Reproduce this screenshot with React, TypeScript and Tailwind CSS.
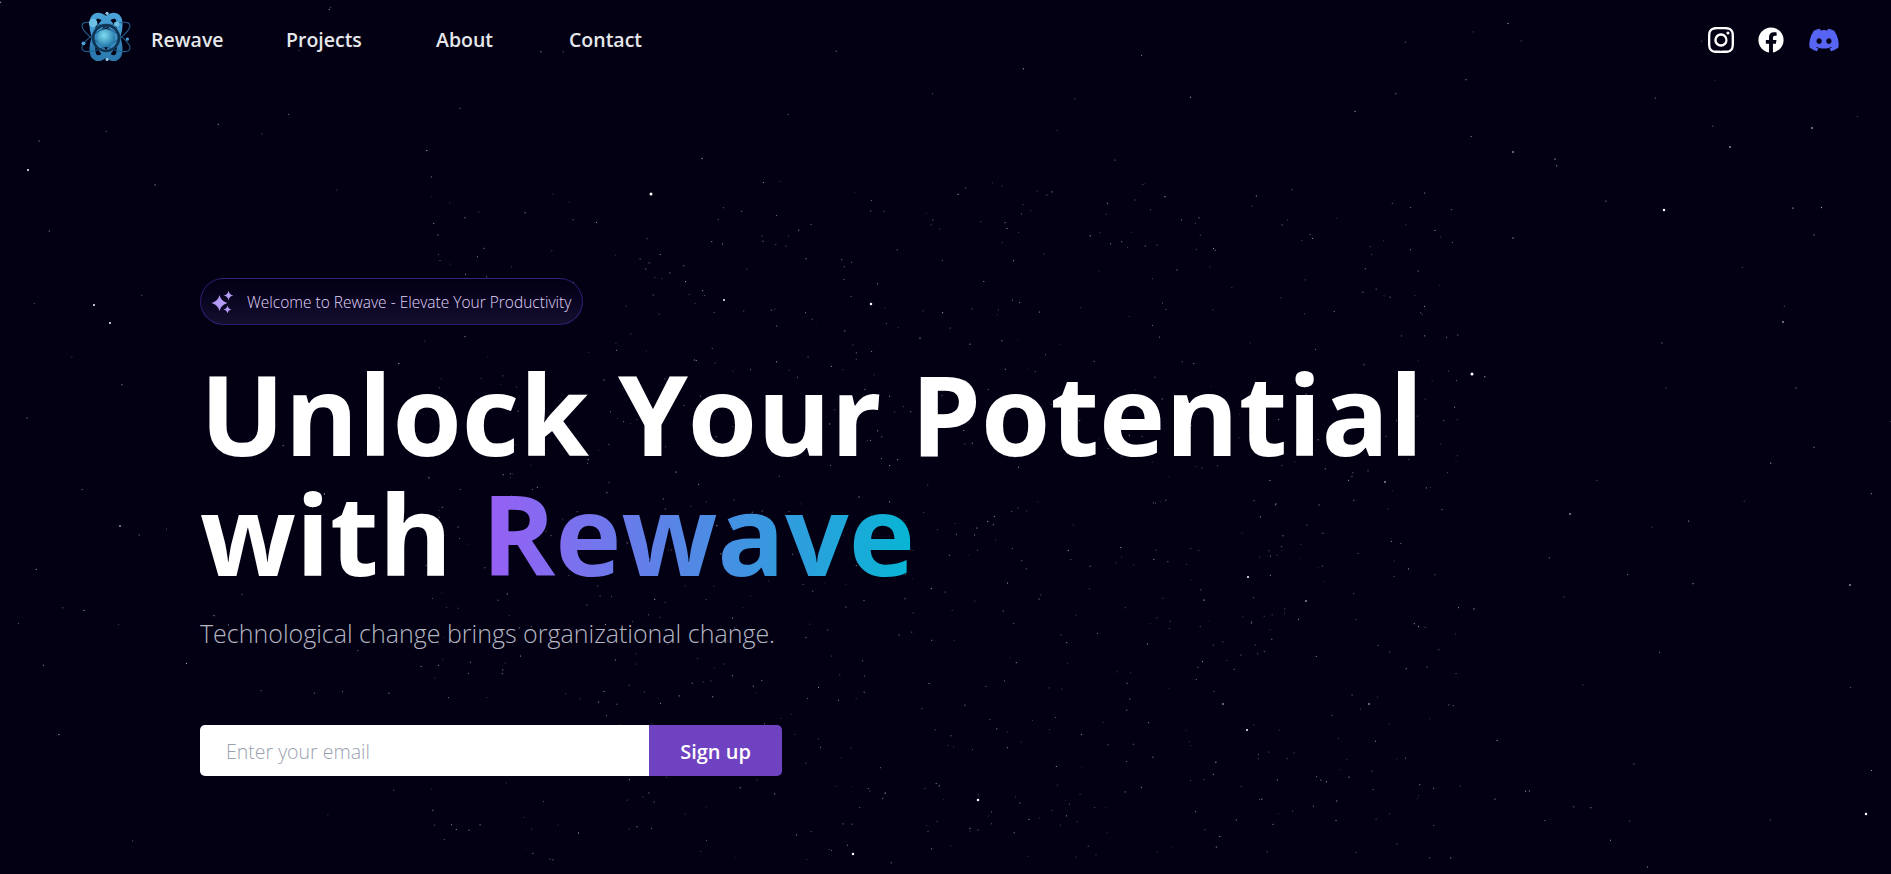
import React from "react";
import { BsInstagram } from "react-icons/bs";
import { FaDiscord, FaFacebook } from "react-icons/fa";

// seeded so the star field comes out the same on every load
const makeStars = (scattered: number, clustered: number) => {
  let seed = 4217;
  const rand = () => {
    seed = (seed * 16807) % 2147483647;
    return seed / 2147483647;
  };
  const out: { x: number; y: number; o: number }[] = [];
  for (let i = 0; i < scattered; i++) {
    out.push({ x: rand() * 1891, y: rand() * 874, o: 0.2 + rand() * 0.6 });
  }
  // most of the stars bunch up around the centre, like a sphere of points
  for (let i = 0; i < clustered; i++) {
    out.push({ x: 420 + rand() * 1040, y: 180 + rand() * 680, o: 0.15 + rand() * 0.5 });
  }
  return out;
};

const stars = makeStars(200, 820);

const brightStars = [
  [28, 170, 2], [651, 194, 3], [871, 304, 2.5], [1472, 374, 3], [978, 800, 2.5],
  [1866, 814, 2.5], [853, 854, 2.5], [94, 305, 2], [110, 323, 2], [724, 300, 2],
  [1664, 210, 2.5], [1247, 730, 2], [1570, 514, 1.5], [1850, 585, 1.5], [120, 526, 1.5],
  [1513, 152, 1.5], [1555, 159, 1.2], [1730, 147, 1.5], [1812, 128, 1.5], [1793, 208, 1.2],
  [1783, 322, 1.5], [1513, 238, 1.2], [1248, 577, 2], [1223, 704, 1.5], [1369, 704, 1.5],
  [1306, 601, 1.5], [1385, 482, 1.5], [1204, 600, 1.2],
];

const StarField = () => (
  <svg className="absolute inset-0" width="1891" height="874" viewBox="0 0 1891 874">
    {stars.map((s, i) => (
      <rect key={i} x={s.x} y={s.y} width="1" height="1" fill="#ffffff" opacity={s.o} />
    ))}
    {brightStars.map(([x, y, r]) => (
      <circle key={`${x}-${y}`} cx={x} cy={y} r={r / 2} fill="#ffffff" />
    ))}
  </svg>
);

const AtomLogo = () => (
  <svg width="56" height="60" viewBox="0 0 52 56" className="-mt-[5px]">
    <defs>
      <radialGradient id="core" cx="40%" cy="35%" r="70%">
        <stop offset="0%" stopColor="#7fdcf2" />
        <stop offset="100%" stopColor="#1b6fa3" />
      </radialGradient>
      <linearGradient id="petal" x1="0" y1="0" x2="0" y2="1">
        <stop offset="0%" stopColor="#4aa3d8" />
        <stop offset="100%" stopColor="#2a78ad" />
      </linearGradient>
    </defs>
    <g fill="none" stroke="url(#petal)" strokeWidth="5.5">
      <ellipse cx="26" cy="27" rx="9.5" ry="21.5" transform="rotate(-26 26 27)" />
      <ellipse cx="26" cy="27" rx="9.5" ry="21.5" transform="rotate(26 26 27)" />
    </g>
    <g fill="none" stroke="#1f5f8c" strokeWidth="1">
      <ellipse cx="26" cy="27" rx="8" ry="25" transform="rotate(-62 26 27)" />
      <ellipse cx="26" cy="27" rx="8" ry="25" transform="rotate(62 26 27)" />
      <circle cx="26" cy="28" r="12" stroke="#0f3555" strokeWidth="2.5" />
    </g>
    <circle cx="26" cy="28" r="8.5" fill="url(#core)" />
    <circle cx="14" cy="14" r="4" fill="#6cc0e4" />
    <circle cx="36" cy="15" r="2.5" fill="#6cc0e4" />
    <circle cx="27" cy="5" r="1.5" fill="#8fc9e6" />
    <circle cx="27" cy="48" r="1.5" fill="#8fc9e6" />
    <circle cx="5" cy="33" r="1.8" fill="#4aa3d8" />
    <circle cx="46" cy="29" r="1.5" fill="#4aa3d8" />
  </svg>
);

const Sparkles = () => (
  <svg width="23" height="24" viewBox="0 0 23 24" fill="#b49bf5">
    <path d="M8.5 5 Q9.8 11 16.5 13 Q9.8 15 8.5 21 Q7.2 15 0.5 13 Q7.2 11 8.5 5 Z" />
    <path d="M17.5 0.5 Q18.2 4.8 22.5 5.5 Q18.2 6.2 17.5 10.5 Q16.8 6.2 12.5 5.5 Q16.8 4.8 17.5 0.5 Z" />
    <path d="M16.5 15.5 Q17.2 18.8 20.5 19.5 Q17.2 20.2 16.5 23.5 Q15.8 20.2 12.5 19.5 Q15.8 18.8 16.5 15.5 Z" />
  </svg>
);

export default function App() {
  return (
    <div className="relative h-[874px] w-full overflow-hidden bg-[#030014] font-['Open_Sans','Noto_Sans',sans-serif] text-white">
      <StarField />

      <div className="relative">
        {/* Navbar */}
        <nav className="flex h-20 items-center justify-between pl-[78px] pr-[51px]">
          <div className="flex items-center text-[19.5px] font-semibold text-gray-200">
            <AtomLogo />
            <span className="ml-[17px] w-[135px]">Rewave</span>
            <span className="w-[150px]">Projects</span>
            <span className="w-[133px]">About</span>
            <span>Contact</span>
          </div>
          <div className="flex items-center gap-6">
            <BsInstagram className="h-[26px] w-[26px] text-white" />
            <FaFacebook className="h-[26px] w-[26px] text-white" />
            <FaDiscord className="h-8 w-8 text-[#5865f2]" />
          </div>
        </nav>

        {/* Hero */}
        <section className="pl-[200px] pt-[198px]">
          <div className="flex h-[47px] w-[383px] items-center rounded-full border border-[#7042f861] bg-gradient-to-b from-[#030014] to-[#15102e] pl-[10px] text-[15.5px] font-light text-[#e0d4fb]">
            <Sparkles />
            <span className="ml-[13px] pt-[2px]">Welcome to Rewave - Elevate Your Productivity</span>
          </div>

          <h1 className="mt-[28px] text-[112px] leading-[120px] font-bold text-white">
            Unlock Your Potential
            <br />
            with{" "}
            <span className="bg-linear-to-r/srgb from-[#9a5ef5] to-[#06b6d4] bg-clip-text text-transparent">
              Rewave
            </span>
          </h1>

          <p className="mt-[22px] text-[25px] font-light text-[#b4b7c2]">
            Technological change brings organizational change.
          </p>

          <form className="mt-[72px] flex h-[51px] w-[582px]">
            <input
              type="email"
              placeholder="Enter your email"
              className="w-[449px] rounded-l-[5px] bg-white px-[26px] pt-[3px] text-[19.5px] text-gray-900 outline-none placeholder:font-light placeholder:text-gray-400"
            />
            <button
              type="button"
              className="flex-1 rounded-r-[5px] bg-[#6f42c1] pt-[3px] text-xl font-semibold text-white"
            >
              Sign up
            </button>
          </form>
        </section>
      </div>
    </div>
  );
}
